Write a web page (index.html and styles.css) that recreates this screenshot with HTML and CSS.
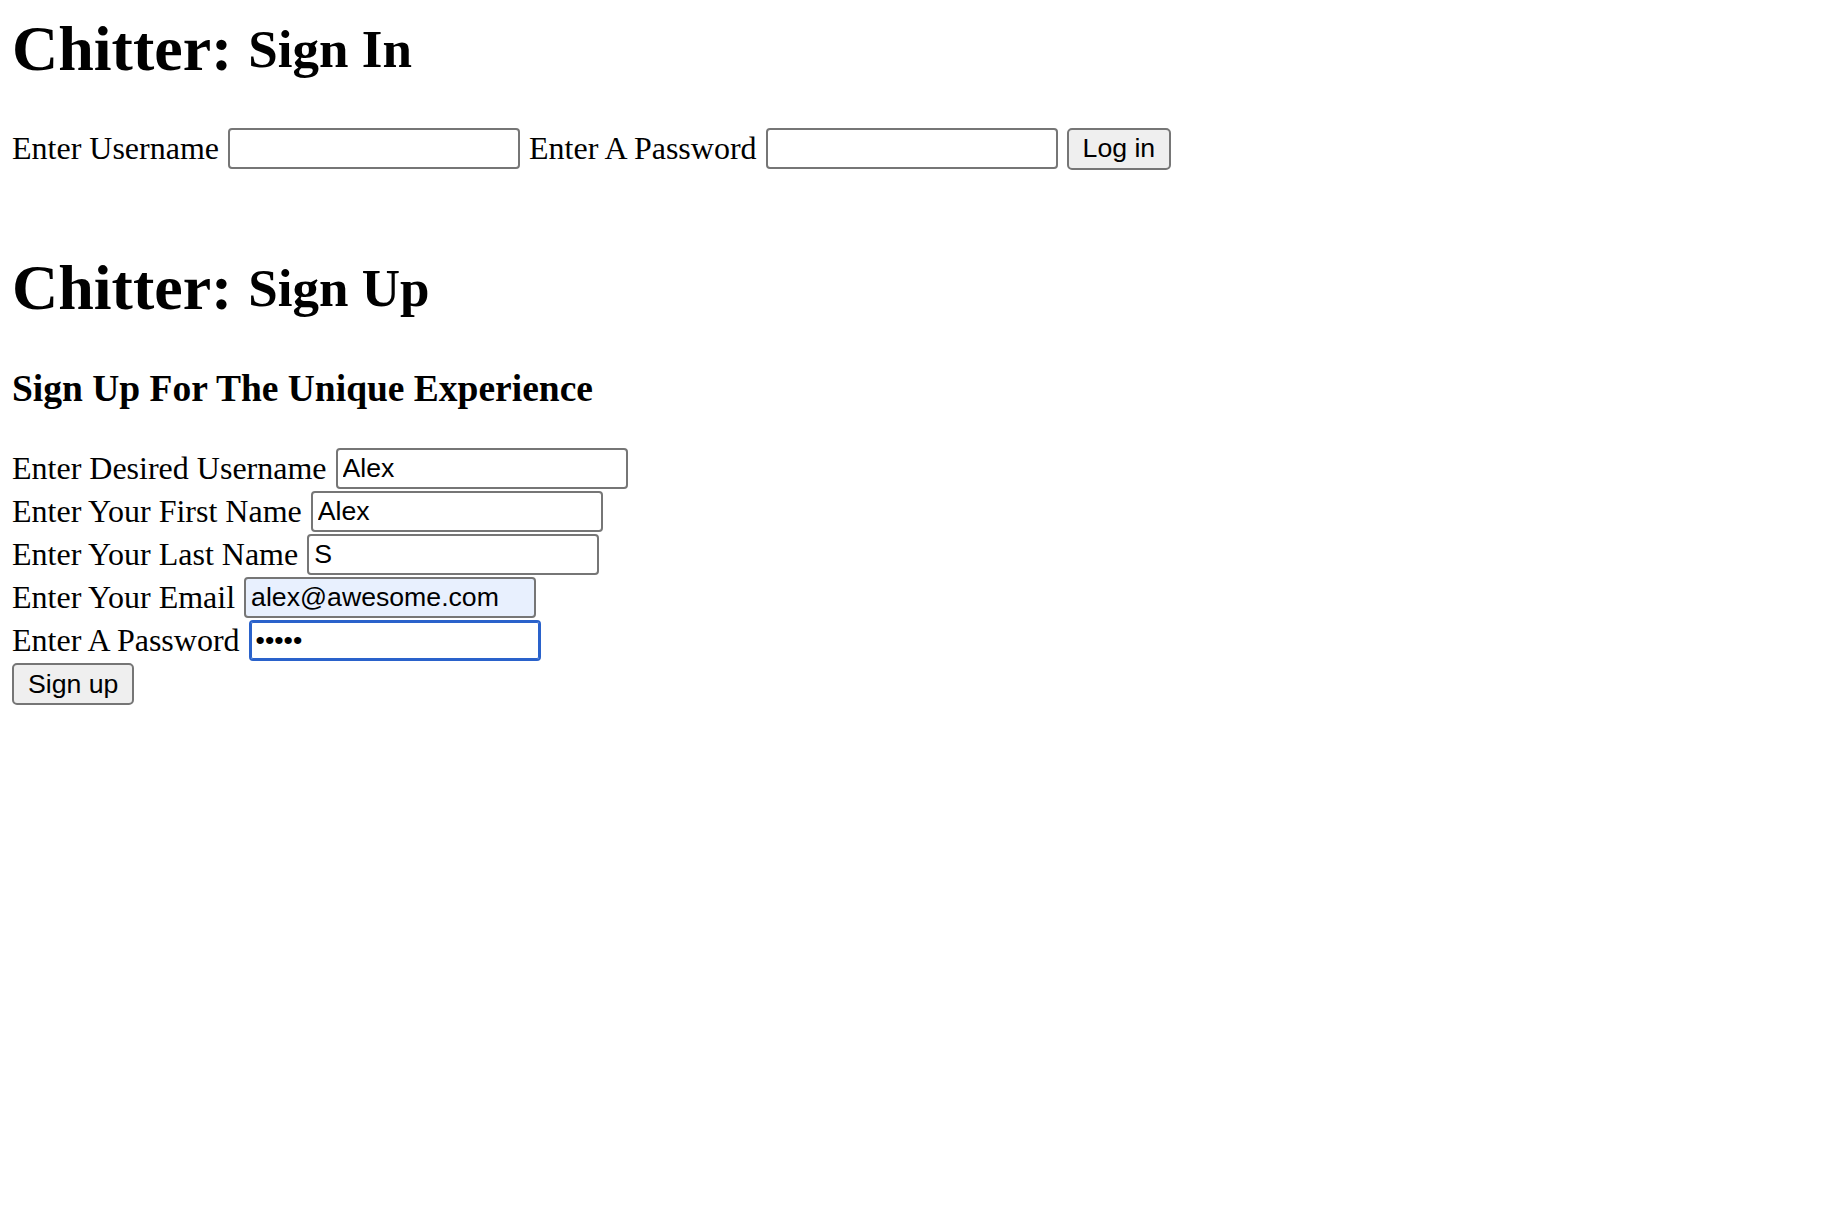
FILE: index.html
```html
<!DOCTYPE html>
<html lang="en">
<head>
<meta charset="utf-8">
<title>Chitter</title>
<link rel="stylesheet" href="styles.css">
</head>
<body>
  <section class="signin">
    <h1 class="title">Chitter: <span class="subtitle">Sign In</span></h1>
    <form class="row row-signin">
      <label class="label">Enter Username</label>
      <input class="field" type="text">
      <label class="label">Enter A Password</label>
      <input class="field" type="password">
      <button class="btn" type="button">Log in</button>
    </form>
  </section>

  <section class="signup">
    <h1 class="title title-second">Chitter: <span class="subtitle">Sign Up</span></h1>
    <h3 class="tagline">Sign Up For The Unique Experience</h3>
    <form class="stack">
      <div class="row">
        <label class="label">Enter Desired Username</label>
        <input class="field" type="text" value="Alex">
      </div>
      <div class="row">
        <label class="label">Enter Your First Name</label>
        <input class="field" type="text" value="Alex">
      </div>
      <div class="row">
        <label class="label">Enter Your Last Name</label>
        <input class="field" type="text" value="S">
      </div>
      <div class="row">
        <label class="label">Enter Your Email</label>
        <input class="field field-autofill" type="text" value="alex@awesome.com">
      </div>
      <div class="row">
        <label class="label">Enter A Password</label>
        <input class="field field-focus" type="password" value="12345">
      </div>
      <button class="btn btn-signup" type="button">Sign up</button>
    </form>
  </section>
</body>
</html>
```

FILE: styles.css
```css
html, body {
  background: #ffffff;
}

body {
  margin: 0 0 0 12px;
  font-family: "Liberation Serif", "Times New Roman", serif;
  font-size: 32px;
  color: #000000;
}

.title {
  margin: 13px 0 0 0;
  font-size: 64px;
  font-weight: bold;
  line-height: 71px;
}

.title-second {
  margin-top: 82px;
}

.subtitle {
  font-size: 53px;
  vertical-align: 3px;
}

.tagline {
  margin: 44px 0 0 0;
  font-size: 37.5px;
  font-weight: bold;
  line-height: 41px;
}

.row {
  display: flex;
  align-items: center;
  gap: 9px;
  height: 43px;
}

.row-signin {
  margin-top: 42px;
}

.stack {
  margin-top: 38px;
  display: flex;
  flex-direction: column;
  align-items: flex-start;
}

.label {
  line-height: 37px;
  white-space: nowrap;
}

.field {
  box-sizing: border-box;
  width: 292px;
  height: 41px;
  margin: 0;
  padding: 0 5px;
  border: 2px solid #767676;
  border-radius: 4px;
  background: #ffffff;
  font-family: "Liberation Sans", Arial, sans-serif;
  font-size: 26.67px;
  color: #000000;
  outline: none;
}

.field-autofill {
  background: #e8f0fe;
}

.field-focus {
  border-color: #2a62cb;
  box-shadow: inset 0 0 0 1px #2a62cb;
}

.btn {
  box-sizing: border-box;
  height: 42px;
  margin: 0;
  padding: 0 14px;
  border: 2px solid #767676;
  border-radius: 5px;
  background: #efefef;
  font-family: "Liberation Sans", Arial, sans-serif;
  font-size: 26.67px;
  color: #000000;
}

.btn-signup {
  margin-top: 1px;
}
```
